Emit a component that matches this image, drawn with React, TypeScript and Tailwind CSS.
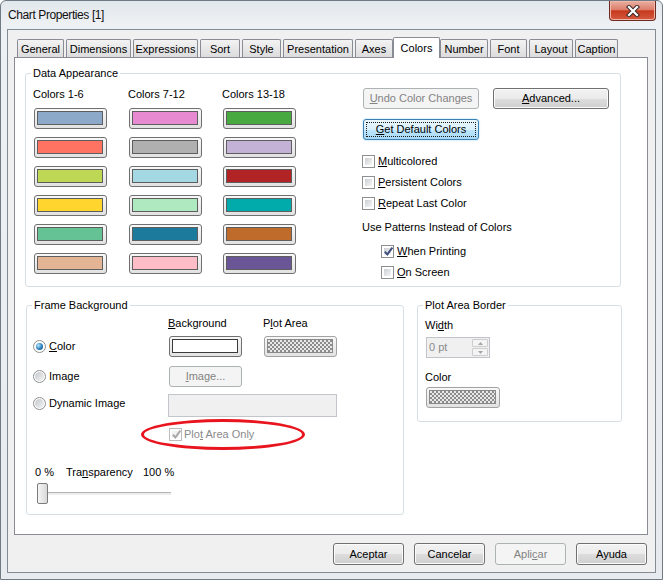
import React from "react";

type Tab = { label: string; cls: string; active?: boolean };

const tabs: Tab[] = [
  { label: "General", cls: "w-[47px]" },
  { label: "Dimensions", cls: "ml-[2px] w-[65px]" },
  { label: "Expressions", cls: "ml-[2px] w-[65px]" },
  { label: "Sort", cls: "ml-[2px] w-[40px]" },
  { label: "Style", cls: "ml-[2px] w-[39px]" },
  { label: "Presentation", cls: "ml-[2px] w-[70px]" },
  { label: "Axes", cls: "ml-[2px] w-[38px]" },
  { label: "Colors", cls: "w-[47px]", active: true },
  { label: "Number", cls: "w-[48px]" },
  { label: "Font", cls: "ml-[2px] w-[37px]" },
  { label: "Layout", cls: "ml-[2px] w-[44px]" },
  { label: "Caption", cls: "ml-[2px] w-[43px]" },
];

// row by row, three columns
const palette = [
  "bg-[#8da9ca]", "bg-[#e78ad2]", "bg-[#48a940]",
  "bg-[#ff7362]", "bg-[#b0b0b0]", "bg-[#c4b2d6]",
  "bg-[#bed855]", "bg-[#a4d8e3]", "bg-[#b22326]",
  "bg-[#ffd52e]", "bg-[#aee9bf]", "bg-[#02abab]",
  "bg-[#65c294]", "bg-[#1c7a9c]", "bg-[#be6b2c]",
  "bg-[#e3b594]", "bg-[#ffbdc7]", "bg-[#6a5597]",
];

const checker =
  "bg-[image:repeating-conic-gradient(#8c8c8c_0%_25%,#e8e8e8_0%_50%)] bg-[length:4px_4px]";

function Swatch({
  inner,
  outer = "border-[#707070]",
  w = "w-[73px]",
  line = "border-[#5e5e5e]",
}: {
  inner: string;
  outer?: string;
  w?: string;
  line?: string;
}) {
  return (
    <div
      className={`${w} h-[21px] rounded-[3px] border ${outer} bg-gradient-to-b from-[#f8f8f8] to-[#e2e2e2] pl-[2px] pr-[3px] pt-[2px] pb-[3px]`}
    >
      <div className={`h-full w-full border ${line} ${inner}`} />
    </div>
  );
}

function Btn({
  children,
  cls = "",
  disabled,
  focused,
}: {
  children: React.ReactNode;
  cls?: string;
  disabled?: boolean;
  focused?: boolean;
}) {
  if (focused) {
    return (
      <div
        className={`${cls} rounded-[3px] border border-[#3c7fb1] bg-[linear-gradient(#eaf6fd_0%,#d9f0fc_50%,#bee6fd_51%,#a7d9f5_100%)] p-[2px] shadow-[0_0_2px_#8fd0f5]`}
      >
        <div className="flex h-full w-full items-center justify-center border border-dotted border-[#1a1a1a]">
          {children}
        </div>
      </div>
    );
  }
  return (
    <div
      className={`${cls} flex items-center justify-center rounded-[3px] border ${
        disabled
          ? "border-[#adb2b5] bg-[#f4f4f4] text-[#838383]"
          : "border-[#707070] bg-[linear-gradient(#f2f2f2_0%,#ebebeb_50%,#dddddd_51%,#cfcfcf_100%)] shadow-[inset_0_0_0_1px_#fbfbfb]"
      }`}
    >
      {children}
    </div>
  );
}

function Box({ checked, disabled }: { checked?: boolean; disabled?: boolean }) {
  return (
    <span
      className={`relative flex h-[13px] w-[13px] shrink-0 border bg-white p-[2px] ${
        disabled ? "border-[#bcbcbc]" : "border-[#8e8f8f]"
      }`}
    >
      <span
        className={`flex-1 ${
          disabled
            ? "bg-[#f2f2f2]"
            : "bg-gradient-to-br from-[#cbcfd4] to-[#f6f6f6]"
        }`}
      />
      {checked && (
        <svg
          className="absolute left-[1px] top-0"
          width="11"
          height="11"
          viewBox="0 0 11 11"
        >
          <path
            d="M1.8 5.6 L4.3 8.4 L9.4 1.6"
            fill="none"
            stroke={disabled ? "#a8a8a8" : "#3d4e7c"}
            strokeWidth="1.9"
          />
        </svg>
      )}
    </span>
  );
}

function Radio({ on }: { on?: boolean }) {
  return (
    <span className="flex h-[13px] w-[13px] shrink-0 items-center justify-center rounded-full border border-[#8e8f8f] bg-white">
      {on ? (
        <span className="h-[7px] w-[7px] rounded-full bg-[radial-gradient(circle_at_35%_35%,#b8e6fc,#2a7fc0_55%,#14466f)]" />
      ) : (
        <span className="h-[9px] w-[9px] rounded-full bg-gradient-to-br from-[#c4c8cd] to-[#f4f4f4]" />
      )}
    </span>
  );
}

function CheckRow({
  cls = "",
  checked,
  children,
}: {
  cls?: string;
  checked?: boolean;
  children: React.ReactNode;
}) {
  return (
    <div className={`${cls} flex h-[13px] items-center gap-[3px]`}>
      <Box checked={checked} />
      <span>{children}</span>
    </div>
  );
}

function Spin() {
  return (
    <div className="flex w-[16px] flex-col gap-px">
      <div className="flex h-[8px] items-center justify-center rounded-[1px] border border-[#cdcdcd] bg-[#f4f4f4]">
        <svg width="5" height="3" viewBox="0 0 5 3">
          <path d="M0 3 L2.5 0 L5 3 Z" fill="#a6a6a6" />
        </svg>
      </div>
      <div className="flex h-[8px] items-center justify-center rounded-[1px] border border-[#cdcdcd] bg-[#f4f4f4]">
        <svg width="5" height="3" viewBox="0 0 5 3">
          <path d="M0 0 L2.5 3 L5 0 Z" fill="#a6a6a6" />
        </svg>
      </div>
    </div>
  );
}

export default function App() {
  return (
    <div className="flex h-[580px] w-[663px] flex-col rounded-t-[6px] border border-[#707a84] bg-[linear-gradient(180deg,#e2e7ec_0px,#eef1f4_24px,#e7ebef_100%)] font-['Liberation_Sans',Arial,sans-serif] text-[11px] leading-[13px] text-black">
      {/* title bar */}
      <div className="flex h-[28px] shrink-0 items-start justify-between pl-[7px]">
        <span className="mt-[7px] text-[12px] leading-[14px] tracking-[-0.4px] text-[#111]">
          Chart Properties [1]
        </span>
        <div className="mr-[6px] flex h-[20px] w-[47px] items-center justify-center rounded-b-[4px] border border-t-0 border-[#6e2a1e] bg-[linear-gradient(#eab0a2_0%,#dd7f6b_45%,#c73a1e_52%,#d45a40_100%)] shadow-[inset_0_0_0_1px_#f0b8aa]">
          <svg width="14" height="12" viewBox="0 0 14 12">
            <path
              d="M3 2 L11 10 M11 2 L3 10"
              stroke="#3a2a28"
              strokeWidth="4.2"
              strokeLinecap="square"
            />
            <path
              d="M3 2 L11 10 M11 2 L3 10"
              stroke="#ffffff"
              strokeWidth="2.2"
              strokeLinecap="square"
            />
          </svg>
        </div>
      </div>

      {/* client area */}
      <div className="mx-[6px] mb-[6px] flex flex-1 flex-col border border-[#838b94] bg-[#f0f0f0]">
        {/* tabs */}
        <div className="flex h-[27px] shrink-0 items-end pl-[9px]">
          {tabs.map((t) =>
            t.active ? (
              <div
                key={t.label}
                className={`${t.cls} relative z-10 -mb-px h-[21px] rounded-t-[2px] border border-b-0 border-[#898c95] bg-white pt-[4px] text-center`}
              >
                {t.label}
              </div>
            ) : (
              <div
                key={t.label}
                className={`${t.cls} h-[18px] rounded-t-[2px] border border-b-0 border-[#898c95] bg-gradient-to-b from-[#f3f3f3] to-[#dcdcdc] pt-[3px] text-center`}
              >
                {t.label}
              </div>
            )
          )}
        </div>

        {/* tab page */}
        <div className="ml-[6px] h-[478px] w-[634px] border border-[#898c95] bg-white pt-[9px]">
          <fieldset className="ml-[10px] h-[220px] w-[596px] rounded-[3px] border border-[#d5dfe5]">
            <legend className="ml-[5px] px-[2px]">Data Appearance</legend>
            <div className="flex">
              <div className="w-[270px] pl-[7px] pt-[8px]">
                <div className="grid h-[13px] grid-cols-[95px_94px_74px]">
                  <span>Colors 1-6</span>
                  <span>Colors 7-12</span>
                  <span>Colors 13-18</span>
                </div>
                <div className="mt-[7px] grid grid-cols-[95px_94px_74px] gap-y-[8px]">
                  {palette.map((c, i) => (
                    <div key={i} className="ml-px">
                      <Swatch inner={c} />
                    </div>
                  ))}
                </div>
              </div>

              <div className="ml-[66px] pt-[8px]">
                <div className="ml-px flex gap-[14px]">
                  <Btn disabled cls="h-[21px] w-[116px]">
                    <span>
                      <u>U</u>ndo Color Changes
                    </span>
                  </Btn>
                  <Btn cls="h-[21px] w-[116px]">
                    <span>
                      <u>A</u>dvanced...
                    </span>
                  </Btn>
                </div>
                <Btn focused cls="ml-px mt-[10px] h-[21px] w-[116px]">
                  <span>
                    <u>G</u>et Default Colors
                  </span>
                </Btn>
                <CheckRow cls="mt-[15px]">
                  <u>M</u>ulticolored
                </CheckRow>
                <CheckRow cls="mt-[8px]">
                  <u>P</u>ersistent Colors
                </CheckRow>
                <CheckRow cls="mt-[8px]">
                  <u>R</u>epeat Last Color
                </CheckRow>
                <div className="mt-[11px] h-[13px]">Use Patterns Instead of Colors</div>
                <CheckRow cls="ml-[19px] mt-[11px]" checked>
                  <u>W</u>hen Printing
                </CheckRow>
                <CheckRow cls="ml-[19px] mt-[8px]">
                  <u>O</u>n Screen
                </CheckRow>
              </div>
            </div>
          </fieldset>

          <div className="ml-[11px] mt-[12px] flex items-start gap-[13px]">
            <fieldset className="h-[216px] w-[378px] rounded-[3px] border border-[#d5dfe5]">
              <legend className="ml-[5px] px-[2px]">Frame Background</legend>
              <div className="pl-[6px]">
                <div className="mt-[5px] flex h-[13px]">
                  <span className="w-[135px]" />
                  <span className="w-[95px]">
                    <u>B</u>ackground
                  </span>
                  <span>
                    P<u>l</u>ot Area
                  </span>
                </div>

                <div className="mt-[6px] flex h-[21px] items-center">
                  <div className="flex w-[135px] items-center gap-[3px]">
                    <Radio on />
                    <span>
                      <u>C</u>olor
                    </span>
                  </div>
                  <div className="ml-px">
                    <Swatch inner="bg-white" line="border-[#3a3a3a]" />
                  </div>
                  <div className="ml-[22px]">
                    <Swatch inner={checker} outer="border-[#a2a2a2]" line="border-[#8a8a8a]" />
                  </div>
                </div>

                <div className="mt-[9px] flex h-[21px] items-center">
                  <div className="flex w-[135px] items-center gap-[3px]">
                    <Radio />
                    <span>Image</span>
                  </div>
                  <Btn disabled cls="ml-px h-[21px] w-[73px]">
                    <span>
                      <u>I</u>mage...
                    </span>
                  </Btn>
                </div>

                <div className="mt-[7px] flex h-[23px] items-start">
                  <div className="mt-[3px] flex w-[135px] items-center gap-[3px]">
                    <Radio />
                    <span>Dynamic Image</span>
                  </div>
                  <div className="h-[23px] w-[169px] border border-[#c2c6ca] bg-[#f0f0f0]" />
                </div>

                <div className="relative mt-[11px] flex h-[13px] items-center">
                  <span className="w-[136px]" />
                  <Box checked disabled />
                  <span className="ml-[2px] text-[#8a8a8a]">
                    Plo<u>t</u> Area Only
                  </span>
                  <div className="pointer-events-none absolute left-[108px] top-[-9px] h-[31px] w-[164px] rounded-[50%] border-[3px] border-[#e8141e]" />
                </div>

                <div className="mt-[25px] flex h-[13px] pl-[2px]">
                  <span className="w-[31px]">0 %</span>
                  <span className="w-[77px]">
                    Tra<u>n</u>sparency
                  </span>
                  <span>100 %</span>
                </div>

                <div className="relative ml-[4px] mt-[4px] flex h-[21px] w-[134px] items-center">
                  <div className="h-[3px] w-full border-t border-[#b4b4b4] bg-[#eceeee]" />
                  <div className="absolute left-0 top-0 h-[21px] w-[11px] rounded-[2px] border border-[#7c7c7c] bg-gradient-to-r from-[#f6f6f6] to-[#d9d9d9]" />
                </div>
              </div>
            </fieldset>

            <fieldset className="h-[123px] w-[205px] rounded-[3px] border border-[#d5dfe5]">
              <legend className="ml-[5px] px-[2px]">Plot Area Border</legend>
              <div className="pl-[7px]">
                <div className="mt-[7px] h-[13px]">
                  Wi<u>d</u>th
                </div>
                <div className="ml-px mt-[5px] flex h-[21px] w-[64px] items-center justify-between border border-[#c0c4c8] bg-[#f0f0f0] pl-[2px] pr-[1px] text-[#8a8a8a]">
                  <span>0 pt</span>
                  <Spin />
                </div>
                <div className="mt-[13px] h-[13px]">Color</div>
                <div className="ml-px mt-[3px]">
                  <Swatch
                    w="w-[74px]"
                    inner={checker}
                    outer="border-[#a2a2a2]"
                    line="border-[#8a8a8a]"
                  />
                </div>
              </div>
            </fieldset>
          </div>
        </div>

        {/* dialog buttons */}
        <div className="mt-[8px] flex justify-end gap-[10px] pr-[8px]">
          <Btn cls="h-[22px] w-[71px]">Aceptar</Btn>
          <Btn cls="h-[22px] w-[71px]">Cancelar</Btn>
          <Btn disabled cls="h-[22px] w-[71px]">
            <span>
              Apli<u>c</u>ar
            </span>
          </Btn>
          <Btn cls="h-[22px] w-[71px]">Ayuda</Btn>
        </div>
      </div>
    </div>
  );
}
